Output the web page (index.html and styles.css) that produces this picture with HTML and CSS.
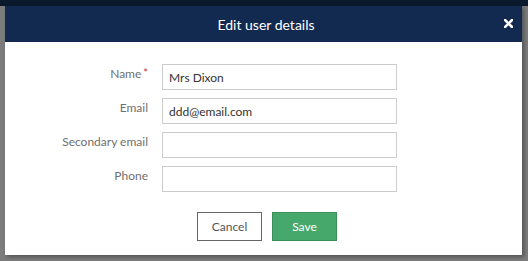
FILE: index.html
```html
<!DOCTYPE html>
<html lang="en">
<head>
    <meta charset="UTF-8">
    <title>Edit user details</title>
    <link rel="stylesheet" href="styles.css">
</head>
<body>
    <div class="page-bar"></div>
    <div class="overlay">
        <!-- Modal -->
        <div class="modal">
            <div class="modal-header">
                <h3>Edit user details</h3>
                <button class="close" type="button" aria-label="Close">
                    <svg width="9" height="9" viewBox="0 0 9 9">
                        <path d="M1 1 L8 8 M8 1 L1 8" stroke="#ffffff" stroke-width="2.6" stroke-linecap="square"/>
                    </svg>
                </button>
            </div>
            <form class="modal-body">
                <div class="form-row">
                    <label for="name">Name<span class="required">*</span></label>
                    <input type="text" id="name" value="Mrs Dixon">
                </div>
                <div class="form-row">
                    <label for="email">Email</label>
                    <input type="text" id="email" value="ddd@email.com">
                </div>
                <div class="form-row">
                    <label for="email2">Secondary email</label>
                    <input type="text" id="email2">
                </div>
                <div class="form-row">
                    <label for="phone">Phone</label>
                    <input type="text" id="phone">
                </div>
                <div class="actions">
                    <button type="button" class="btn btn-cancel">Cancel</button>
                    <button type="submit" class="btn btn-save">Save</button>
                </div>
            </form>
        </div>
    </div>
</body>
</html>
```

FILE: styles.css
```css
body {
    margin: 0;
    padding: 0;
    font-family: 'Lato', sans-serif;
    background-color: #7c7c7c;
    height: 261px;
    overflow: hidden;
}

.page-bar {
    height: 6px;
    background-color: #0b192c;
}

.overlay {
    padding-left: 5px;
}

.modal {
    width: 517px;
    height: 249px;
    background-color: #ffffff;
    box-shadow: 2px 2px 4px rgba(0, 0, 0, 0.35);
    display: flex;
    flex-direction: column;
}

.modal-header {
    height: 36px;
    background-color: #132a50;
    display: flex;
    align-items: center;
    justify-content: center;
    position: relative;
}

.modal-header h3 {
    margin: 0;
    color: #ffffff;
    font-size: 14px;
    font-weight: 400;
    padding-left: 5px;
}

.close {
    position: absolute;
    right: 8px;
    top: 13px;
    background: none;
    border: none;
    padding: 0;
    width: 10px;
    height: 10px;
    cursor: pointer;
    display: flex;
}

.modal-body {
    padding-top: 22px;
    display: flex;
    flex-direction: column;
}

.form-row {
    display: flex;
    margin-bottom: 8px;
}

.form-row label {
    width: 143px;
    text-align: right;
    padding-top: 2px;
    margin-right: 14px;
    font-size: 12px;
    color: #6f6f6f;
}

.required {
    color: #d0312d;
    font-size: 11px;
    vertical-align: top;
    margin-left: 2px;
}

.form-row input {
    width: 235px;
    height: 26px;
    box-sizing: border-box;
    border: 1px solid #cccccc;
    padding: 0 6px;
    font-family: 'Lato', sans-serif;
    font-size: 12px;
    color: #333333;
    outline: none;
}

.actions {
    display: flex;
    justify-content: center;
    gap: 10px;
    padding-left: 7px;
    margin-top: 12px;
}

.btn {
    width: 65px;
    height: 29px;
    font-family: 'Lato', sans-serif;
    font-size: 12px;
    cursor: pointer;
}

.btn-cancel {
    background-color: #ffffff;
    border: 1px solid #666666;
    color: #555555;
}

.btn-save {
    background-color: #47a86b;
    border: 1px solid #3a8f5a;
    color: #ffffff;
}
```
